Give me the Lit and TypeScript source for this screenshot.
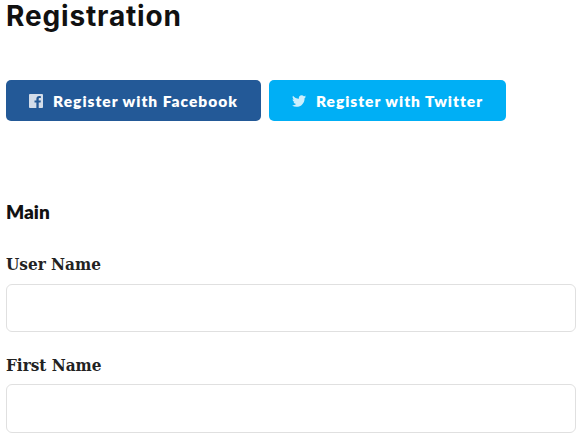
import { LitElement, html, css } from "lit";
import { customElement } from "lit/decorators.js";

@customElement("app-root")
export class AppRoot extends LitElement {
  static styles = css`
    :host { display: block; width: 581px; height: 438px; overflow: hidden; background: #fff; box-sizing: border-box; padding: 0 5px 0 6px; }
    h1 { margin: 0; height: 32px; font: 700 28px/32px Inter, sans-serif; color: #111; letter-spacing: 0.85px; }
    .social { display: flex; gap: 8px; margin-top: 48px; }
    .btn { height: 41px; box-sizing: border-box; border-radius: 5px; display: flex; align-items: center; justify-content: center; gap: 10px; color: #fff; font: 800 15.5px/20px Lato, sans-serif; letter-spacing: 1px; }
    .btn svg { display: block; opacity: 0.8; }
    .fb { width: 255px; background: #235997; }
    .tw { width: 237px; background: #00aff5; }
    h3 { margin: 79px 0 0; font: 800 19px/24px Lato, sans-serif; color: #111; }
    .field { display: flex; flex-direction: column; }
    .main-fields { margin-top: 28px; display: flex; flex-direction: column; gap: 20px; }
    label { font: 700 17px/26px "DejaVu Serif Condensed", "DejaVu Serif", serif; color: #222; height: 24px; margin-bottom: 8px; }
    .field:first-child label { line-height: 24px; }
    .input { height: 48px; box-sizing: border-box; border: 1px solid #e0e0e0; border-radius: 6px; background: #fff; width: 570px; }
    .field:last-child .input { height: 49px; }
  `;
  render() {
    return html`
      <h1>Registration</h1>
      <div class="social">
        <div class="btn fb">
          <svg width="14" height="14" viewBox="0 0 15 15"><path fill="#fff" d="M1 0h13a1 1 0 0 1 1 1v13a1 1 0 0 1-1 1h-3.600V9.200h2l.3-2.300h-2.300V5.500c0-.7.2-1.100 1.100-1.100h1.200V2.300c-.3 0-1-.1-1.800-.1-1.800 0-3 1.100-3 3.100v1.600h-2v2.300h2V15H1a1 1 0 0 1-1-1V1a1 1 0 0 1 1-1z"/></svg>
          <span>Register with Facebook</span>
        </div>
        <div class="btn tw">
          <svg width="14" height="12" viewBox="0 0 24 20"><path fill="#fff" d="M24 2.400c-.9.400-1.800.700-2.800.800 1-.6 1.800-1.600 2.200-2.700-1 .6-2 1-3.100 1.200A4.900 4.900 0 0 0 11.900 6.200C7.800 6 4.200 4 1.700.9c-1.300 2.200-.6 5.100 1.500 6.500-.8 0-1.500-.2-2.200-.6 0 2.300 1.600 4.400 3.900 4.900-.7.200-1.500.2-2.200.1.600 2 2.400 3.400 4.600 3.400A9.900 9.900 0 0 1 0 17.700 14 14 0 0 0 7.500 20c9.100 0 14.300-7.700 14-14.600 1-.7 1.800-1.600 2.500-3z"/></svg>
          <span>Register with Twitter</span>
        </div>
      </div>
      <h3>Main</h3>
      <div class="main-fields">
        <div class="field"><label>User Name</label><div class="input"></div></div>
        <div class="field"><label>First Name</label><div class="input"></div></div>
      </div>
    `;
  }
}
